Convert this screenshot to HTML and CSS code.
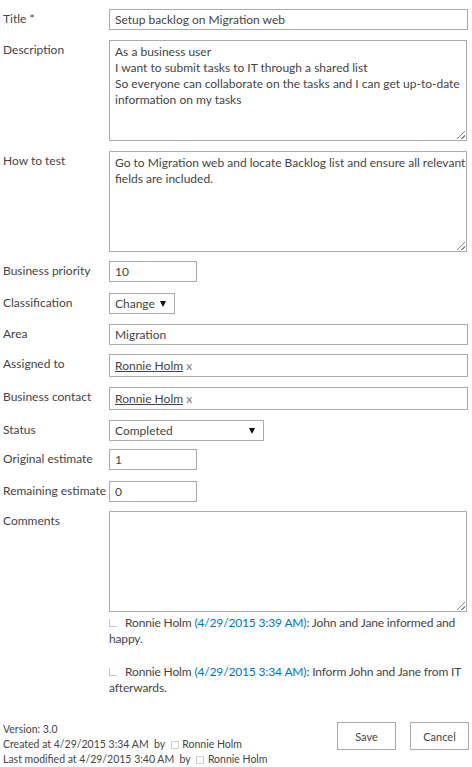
FILE: index.html
```html
<!DOCTYPE html>
<html>
<head>
<meta charset="utf-8">
<link rel="stylesheet" href="styles.css">
</head>
<body>
<div class="form">
  <div class="row">
    <div class="label">Title <span class="req">*</span></div>
    <div class="box wide">Setup backlog on Migration web</div>
  </div>
  <div class="row">
    <div class="label">Description</div>
    <div class="box area">As a business user<br>I want to submit tasks to IT through a shared list<br>So everyone can collaborate on the tasks and I can get up-to-date information on my tasks<span class="grip"></span></div>
  </div>
  <div class="row g9">
    <div class="label">How to test</div>
    <div class="box area">Go to Migration web and locate Backlog list and ensure all relevant fields are included.<span class="grip"></span></div>
  </div>
  <div class="row g11">
    <div class="label">Business priority</div>
    <div class="box short">10</div>
  </div>
  <div class="row">
    <div class="label">Classification</div>
    <div class="box select sel-class">Change<span class="tri"></span></div>
  </div>
  <div class="row g9">
    <div class="label">Area</div>
    <div class="box wide">Migration</div>
  </div>
  <div class="row">
    <div class="label">Assigned to</div>
    <div class="box wide user"><span class="uname">Ronnie Holm</span> <span class="ux">x</span></div>
  </div>
  <div class="row">
    <div class="label">Business contact</div>
    <div class="box wide user"><span class="uname">Ronnie Holm</span> <span class="ux">x</span></div>
  </div>
  <div class="row g8">
    <div class="label">Status</div>
    <div class="box select sel-status">Completed<span class="tri"></span></div>
  </div>
  <div class="row g11">
    <div class="label">Original estimate</div>
    <div class="box short">1</div>
  </div>
  <div class="row g9">
    <div class="label">Remaining estimate</div>
    <div class="box short">0</div>
  </div>
  <div class="row">
    <div class="label">Comments</div>
    <div class="field">
      <div class="box area"><span class="grip"></span></div>
      <div class="comments">
        <p class="comment"><span class="ico"></span><span class="who">Ronnie Holm</span> <span class="when">(4/29/2015 3:39 AM)</span>: John and Jane informed and happy.</p>
        <p class="comment"><span class="ico"></span><span class="who">Ronnie Holm</span> <span class="when">(4/29/2015 3:34 AM)</span>: Inform John and Jane from IT afterwards.</p>
      </div>
    </div>
  </div>
  <div class="footer">
    <div class="meta">
      <div>Version: 3.0</div>
      <div>Created at 4/29/2015 3:34 AM&nbsp; by <span class="pic"></span> Ronnie Holm</div>
      <div>Last modified at 4/29/2015 3:40 AM&nbsp; by <span class="pic"></span> Ronnie Holm</div>
    </div>
    <div class="buttons">
      <div class="btn">Save</div>
      <div class="btn">Cancel</div>
    </div>
  </div>
</div>
</body>
</html>
```
FILE: styles.css
```css
* { box-sizing: border-box; }
html, body { margin: 0; padding: 0; background: #fff; }
body {
  font-family: Lato, "Liberation Sans", sans-serif;
  font-size: 12px;
  color: #444;
}
.form { padding: 9px 3px 0 3px; }
.row { display: flex; align-items: flex-start; margin-bottom: 10px; }
.row.g8 { margin-bottom: 8px; }
.row.g9 { margin-bottom: 9px; }
.row.g11 { margin-bottom: 11px; }
.label { width: 106px; flex: none; padding-top: 2px; line-height: 16px; white-space: nowrap; }
.req { color: #444; }
.field { flex: none; width: 359px; }
.box {
  position: relative;
  border: 1px solid #ababab;
  background: #fff;
  line-height: 16px;
  padding: 2px 5px;
  height: 21px;
  white-space: nowrap;
}
.wide { width: 359px; }
.short { width: 88px; }
.area { width: 358px; height: 101px; white-space: normal; padding: 3px 0 3px 5px; }
.user { height: 23px; padding-top: 3px; }
.uname { text-decoration: underline; }
.ux { color: #777; }
.select { display: flex; align-items: center; justify-content: space-between; padding: 2px 8px 2px 5px; }
.sel-class { width: 66px; }
.sel-status { width: 155px; }
.tri {
  width: 0; height: 0;
  border-left: 3px solid transparent;
  border-right: 3px solid transparent;
  border-top: 6px solid #111;
}
.grip {
  position: absolute; right: 1px; bottom: 1px;
  width: 8px; height: 8px;
  background: linear-gradient(135deg, transparent 45%, #888 45%, #888 55%, transparent 55%, transparent 75%, #888 75%, #888 85%, transparent 85%);
}
.comments { padding-top: 3px; letter-spacing: -0.15px; }
.comment { margin: 0 0 17px 0; line-height: 16px; }
.comment:last-child { margin-bottom: 0; }
.ico {
  display: inline-block; width: 8px; height: 8px;
  border-left: 1px solid #c4c4c4; border-bottom: 1px solid #c4c4c4;
  margin-right: 8px;
}
.when { color: #0072c6; }
.footer { display: flex; justify-content: space-between; align-items: flex-start; margin-top: 26px; }
.meta { font-size: 10.5px; line-height: 15px; }
.pic { display: inline-block; width: 8px; height: 8px; border: 1px solid #cfcfcf; vertical-align: -1px; margin: 0 1px 0 3px; }
.buttons { display: flex; gap: 14px; }
.btn {
  width: 59px; height: 28px; border: 1px solid #ababab; background: #fff;
  display: flex; align-items: center; justify-content: center;
  font-size: 11px; color: #444;
}
```
